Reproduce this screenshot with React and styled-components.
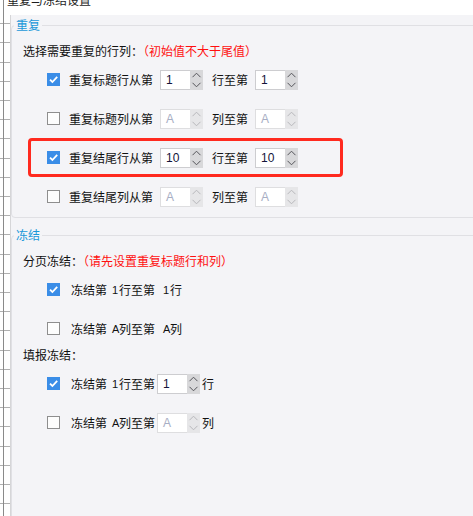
import React from "react";
import styled, { createGlobalStyle } from "styled-components";

const Global = createGlobalStyle`
  html, body { margin: 0; padding: 0; background: #fff; overflow: hidden; }
  body {
    font-family: "Noto Sans CJK SC", "Noto Sans", sans-serif;
    font-size: 12px;
    color: #111;
  }
  * { box-sizing: border-box; }
`;

const ticks = `repeating-linear-gradient(to bottom, transparent 0, transparent 18.2px, #b0b0b0 18.2px, #b0b0b0 19.2px)`;

const Page = styled.div`
  display: flex;
  width: 473px;
  height: 516px;
  overflow: hidden;
  background: #fff;
`;

const Rule = styled.div`
  flex: none;
  width: 4px;
  background: ${ticks};
  background-position: 0 5px;
  border-right: 1px solid #8a8a8a;
`;

const Column = styled.div`
  flex: 1;
  display: flex;
  flex-direction: column;
  min-width: 0;
`;

const TitleBar = styled.div`
  flex: none;
  height: 15px;
  background: #fff;
  overflow: hidden;
  padding-left: 3px;
`;

const Title = styled.div`
  margin-top: -7px;
  line-height: 14px;
  font-size: 12px;
  color: #1e1e1e;
  white-space: nowrap;
`;

const Main = styled.div`
  flex: 1;
  display: flex;
  min-height: 0;
`;

const Ticks = styled.div`
  flex: none;
  width: 7px;
  background: ${ticks};
  background-position: 0 -10px;
  border-right: 1px solid #d6d6d8;
`;

const Body = styled.div`
  flex: 1;
  display: flex;
  flex-direction: column;
  background: #f4f4f7;
  padding-top: 3px;
  overflow: hidden;
  min-width: 0;
`;

const Group = styled.fieldset`
  margin: ${(p) => (p.$fill ? "10px -12px -10px 0" : "0 -12px 0 0")};
  padding: 0;
  border: 1px solid #e0e0e4;
  border-radius: 4px;
  min-width: 0;
  flex: ${(p) => (p.$fill ? "1" : "none")};
`;

const Legend = styled.legend`
  margin-left: 2px;
  padding: 0 2px;
  font-size: 12px;
  line-height: 14px;
  color: #1a98d9;
`;

const GroupBody = styled.div`
  padding: 12px 0 1px 11px;
`;

const Heading = styled.div`
  height: 14px;
  line-height: 14px;
  margin-bottom: 2px;
  white-space: nowrap;
  color: #111;
`;

const Hint = styled.span`
  color: #ff1010;
`;

const Row = styled.div`
  display: flex;
  align-items: center;
  width: 315px;
  height: 39px;
  margin-left: 5px;
  padding-left: 16px;
  border: 3px solid ${(p) => (p.$highlight ? "#ff2a1f" : "transparent")};
  border-radius: 4px;
  white-space: nowrap;
`;

const Box = styled.span`
  flex: none;
  display: inline-flex;
  align-items: center;
  justify-content: center;
  width: 13px;
  height: 13px;
  margin-right: ${(p) => (p.$loose ? "11px" : "9px")};
  background: ${(p) => (p.$checked ? "#3a8de7" : "#fdfdfd")};
  border: ${(p) => (p.$checked ? "none" : "1px solid #8e8e8e")};
`;

const Label = styled.span`
  line-height: 14px;
  color: #111;
`;

const Num = styled.span`
  display: inline-block;
  width: 7px;
  margin-left: ${(p) => (p.$wide ? "5px" : "8px")};
  font-family: "Liberation Sans", sans-serif;
  font-size: 11px;
  line-height: 14px;
  color: #111;
`;

const Spinner = styled.span`
  flex: none;
  display: inline-flex;
  height: 20px;
  margin: ${(p) => (p.$tight ? "0 2px" : "0 9px 0 7px")};
`;

const SpinField = styled.span`
  width: 30px;
  height: 20px;
  padding-left: 5px;
  background: #fff;
  border: 1px solid ${(p) => (p.$disabled ? "#dedee0" : "#cdcdd0")};
  border-right: none;
  font-family: "Liberation Sans", sans-serif;
  font-size: 12px;
  line-height: 18px;
  color: ${(p) => (p.$disabled ? "#a7aec4" : "#14143a")};
`;

const SpinButtons = styled.span`
  width: 13px;
  height: 20px;
  background: ${(p) => (p.$disabled ? "#e6e6e8" : "#d8d8da")};
  display: inline-flex;
`;

const Check = () => (
  <svg width="13" height="13" viewBox="0 0 13 13">
    <path d="M3 6.6 L5.4 9 L10.2 3.8" fill="none" stroke="#fff" strokeWidth="1.8" />
  </svg>
);

const CheckBox = ({ checked, loose }) => (
  <Box $checked={checked} $loose={loose}>
    {checked && <Check />}
  </Box>
);

const Spin = ({ value, disabled, tight }) => (
  <Spinner $tight={tight}>
    <SpinField $disabled={disabled}>{value}</SpinField>
    <SpinButtons $disabled={disabled}>
      <svg width="13" height="20" viewBox="0 0 13 20">
        <path
          d="M2.5 7.2 L6.5 3.2 L10.5 7.2 M2.5 12.8 L6.5 16.8 L10.5 12.8"
          fill="none"
          stroke={disabled ? "#b8b8bc" : "#55555a"}
          strokeWidth="1"
        />
      </svg>
    </SpinButtons>
  </Spinner>
);

const RepeatRow = ({ checked, label, mid, value, highlight }) => (
  <Row $highlight={highlight}>
    <CheckBox checked={checked} />
    <Label>{label}</Label>
    <Spin value={value} disabled={!checked} />
    <Label>{mid}</Label>
    <Spin value={value} disabled={!checked} />
  </Row>
);

export default function App() {
  return (
    <>
      <Global />
      <Page>
        <Rule />
        <Column>
          <TitleBar>
            <Title>重复与冻结设置</Title>
          </TitleBar>
          <Main>
            <Ticks />
            <Body>
              <Group>
                <Legend>重复</Legend>
                <GroupBody>
                  <Heading>
                    选择需要重复的行列：<Hint>（初始值不大于尾值）</Hint>
                  </Heading>
                  <RepeatRow checked label="重复标题行从第" mid="行至第" value="1" />
                  <RepeatRow label="重复标题列从第" mid="列至第" value="A" />
                  <RepeatRow checked highlight label="重复结尾行从第" mid="行至第" value="10" />
                  <RepeatRow label="重复结尾列从第" mid="列至第" value="A" />
                </GroupBody>
              </Group>
              <Group $fill>
                <Legend>冻结</Legend>
                <GroupBody>
                  <Heading>
                    分页冻结：<Hint>（请先设置重复标题行和列）</Hint>
                  </Heading>
                  <Row>
                    <CheckBox checked loose />
                    <Label>冻结第</Label>
                    <Num $wide>1</Num>
                    <Label>行至第</Label>
                    <Num>1</Num>
                    <Label>行</Label>
                  </Row>
                  <Row>
                    <CheckBox loose />
                    <Label>冻结第</Label>
                    <Num $wide>A</Num>
                    <Label>列至第</Label>
                    <Num>A</Num>
                    <Label>列</Label>
                  </Row>
                  <Heading>填报冻结：</Heading>
                  <Row>
                    <CheckBox checked loose />
                    <Label>冻结第</Label>
                    <Num $wide>1</Num>
                    <Label>行至第</Label>
                    <Spin value="1" tight />
                    <Label>行</Label>
                  </Row>
                  <Row>
                    <CheckBox loose />
                    <Label>冻结第</Label>
                    <Num $wide>A</Num>
                    <Label>列至第</Label>
                    <Spin value="A" disabled tight />
                    <Label>列</Label>
                  </Row>
                </GroupBody>
              </Group>
            </Body>
          </Main>
        </Column>
      </Page>
    </>
  );
}
